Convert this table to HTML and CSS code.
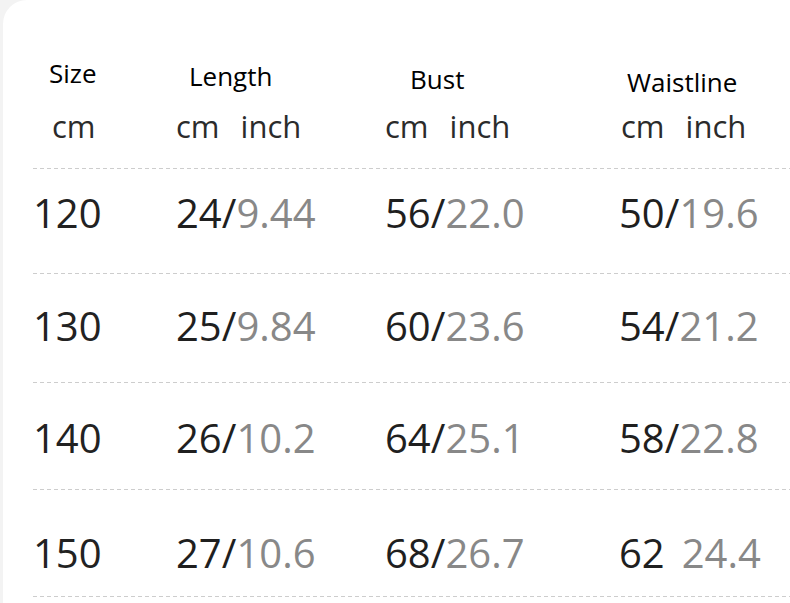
FILE: index.html
```html
<!DOCTYPE html>
<html lang="en">
<head>
<meta charset="utf-8">
<title>Size chart</title>
<link rel="stylesheet" href="styles.css">
</head>
<body>
<main class="card">
  <section class="chart">
    <div class="head">
      <div class="title title-size">Size</div>
      <div class="title title-length">Length</div>
      <div class="title title-bust">Bust</div>
      <div class="title title-waist">Waistline</div>
      <div class="units units-size"><span>cm</span></div>
      <div class="units"><span>cm</span><span>inch</span></div>
      <div class="units"><span>cm</span><span>inch</span></div>
      <div class="units units-waist"><span>cm</span><span>inch</span></div>
    </div>

    <div class="row r1">
      <div class="cell">120</div>
      <div class="cell"><span class="cm">24/</span><span class="in">9.44</span></div>
      <div class="cell"><span class="cm">56/</span><span class="in">22.0</span></div>
      <div class="cell"><span class="cm">50/</span><span class="in">19.6</span></div>
    </div>
    <div class="row r2">
      <div class="cell">130</div>
      <div class="cell"><span class="cm">25/</span><span class="in">9.84</span></div>
      <div class="cell"><span class="cm">60/</span><span class="in">23.6</span></div>
      <div class="cell"><span class="cm">54/</span><span class="in">21.2</span></div>
    </div>
    <div class="row r3">
      <div class="cell">140</div>
      <div class="cell"><span class="cm">26/</span><span class="in">10.2</span></div>
      <div class="cell"><span class="cm">64/</span><span class="in">25.1</span></div>
      <div class="cell"><span class="cm">58/</span><span class="in">22.8</span></div>
    </div>
    <div class="row r4">
      <div class="cell">150</div>
      <div class="cell"><span class="cm">27/</span><span class="in">10.6</span></div>
      <div class="cell"><span class="cm">68/</span><span class="in">26.7</span></div>
      <div class="cell"><span class="cm cm-gap">62</span><span class="in">24.4</span></div>
    </div>
  </section>
</main>
</body>
</html>
```

FILE: styles.css
```css
html, body {
  margin: 0;
  padding: 0;
}

body {
  width: 790px;
  height: 603px;
  overflow: hidden;
  background: #f3f3f3;
  font-family: "Open Sans", "Noto Sans", "DejaVu Sans", sans-serif;
}

.card {
  margin-left: 3px;
  height: 603px;
  background: #ffffff;
  border-top-left-radius: 24px;
  padding-left: 30px;
  box-sizing: border-box;
}

.head,
.row {
  display: grid;
  grid-template-columns: 143px 209px 234px 1fr;
}

/* header */
.head {
  grid-template-rows: 49px 40px;
  padding-top: 57px;
  padding-bottom: 22px;
}

.title {
  font-size: 26px;
  line-height: 33px;
  color: #000;
}

.title-size { padding-left: 16px; }
.title-length { padding-left: 13px; padding-top: 3px; }
.title-bust { padding-left: 25px; padding-top: 6px; }
.title-waist { padding-left: 8px; padding-top: 9px; }

.units {
  display: flex;
  gap: 21px;
  font-size: 31px;
  line-height: 40px;
  color: #2b2b2b;
}

.units-size { padding-left: 19px; }
.units-waist { padding-left: 2px; }

/* rows */
.row {
  box-sizing: border-box;
  font-size: 40px;
  line-height: 52px;
  color: #222;
  background-image: linear-gradient(to right, #cdcdcd 0 4px, transparent 4px 7px);
  background-size: 7px 1px;
  background-repeat: repeat-x;
  background-position: 0 0;
}

.r1 { height: 105px; padding-top: 19px; }
.r2 { height: 109px; padding-top: 27px; }
.r3 { height: 107px; padding-top: 30px; }
.r4 {
  height: 108px;
  padding-top: 38px;
  background-image:
    linear-gradient(to right, #cdcdcd 0 4px, transparent 4px 7px),
    linear-gradient(to right, #cdcdcd 0 4px, transparent 4px 7px);
  background-position: 0 0, 0 107px;
}

.cell {
  white-space: nowrap;
}

.cm { color: #1f1f1f; }
.in { color: #888; }
.cm-gap { margin-right: 17px; }
```
